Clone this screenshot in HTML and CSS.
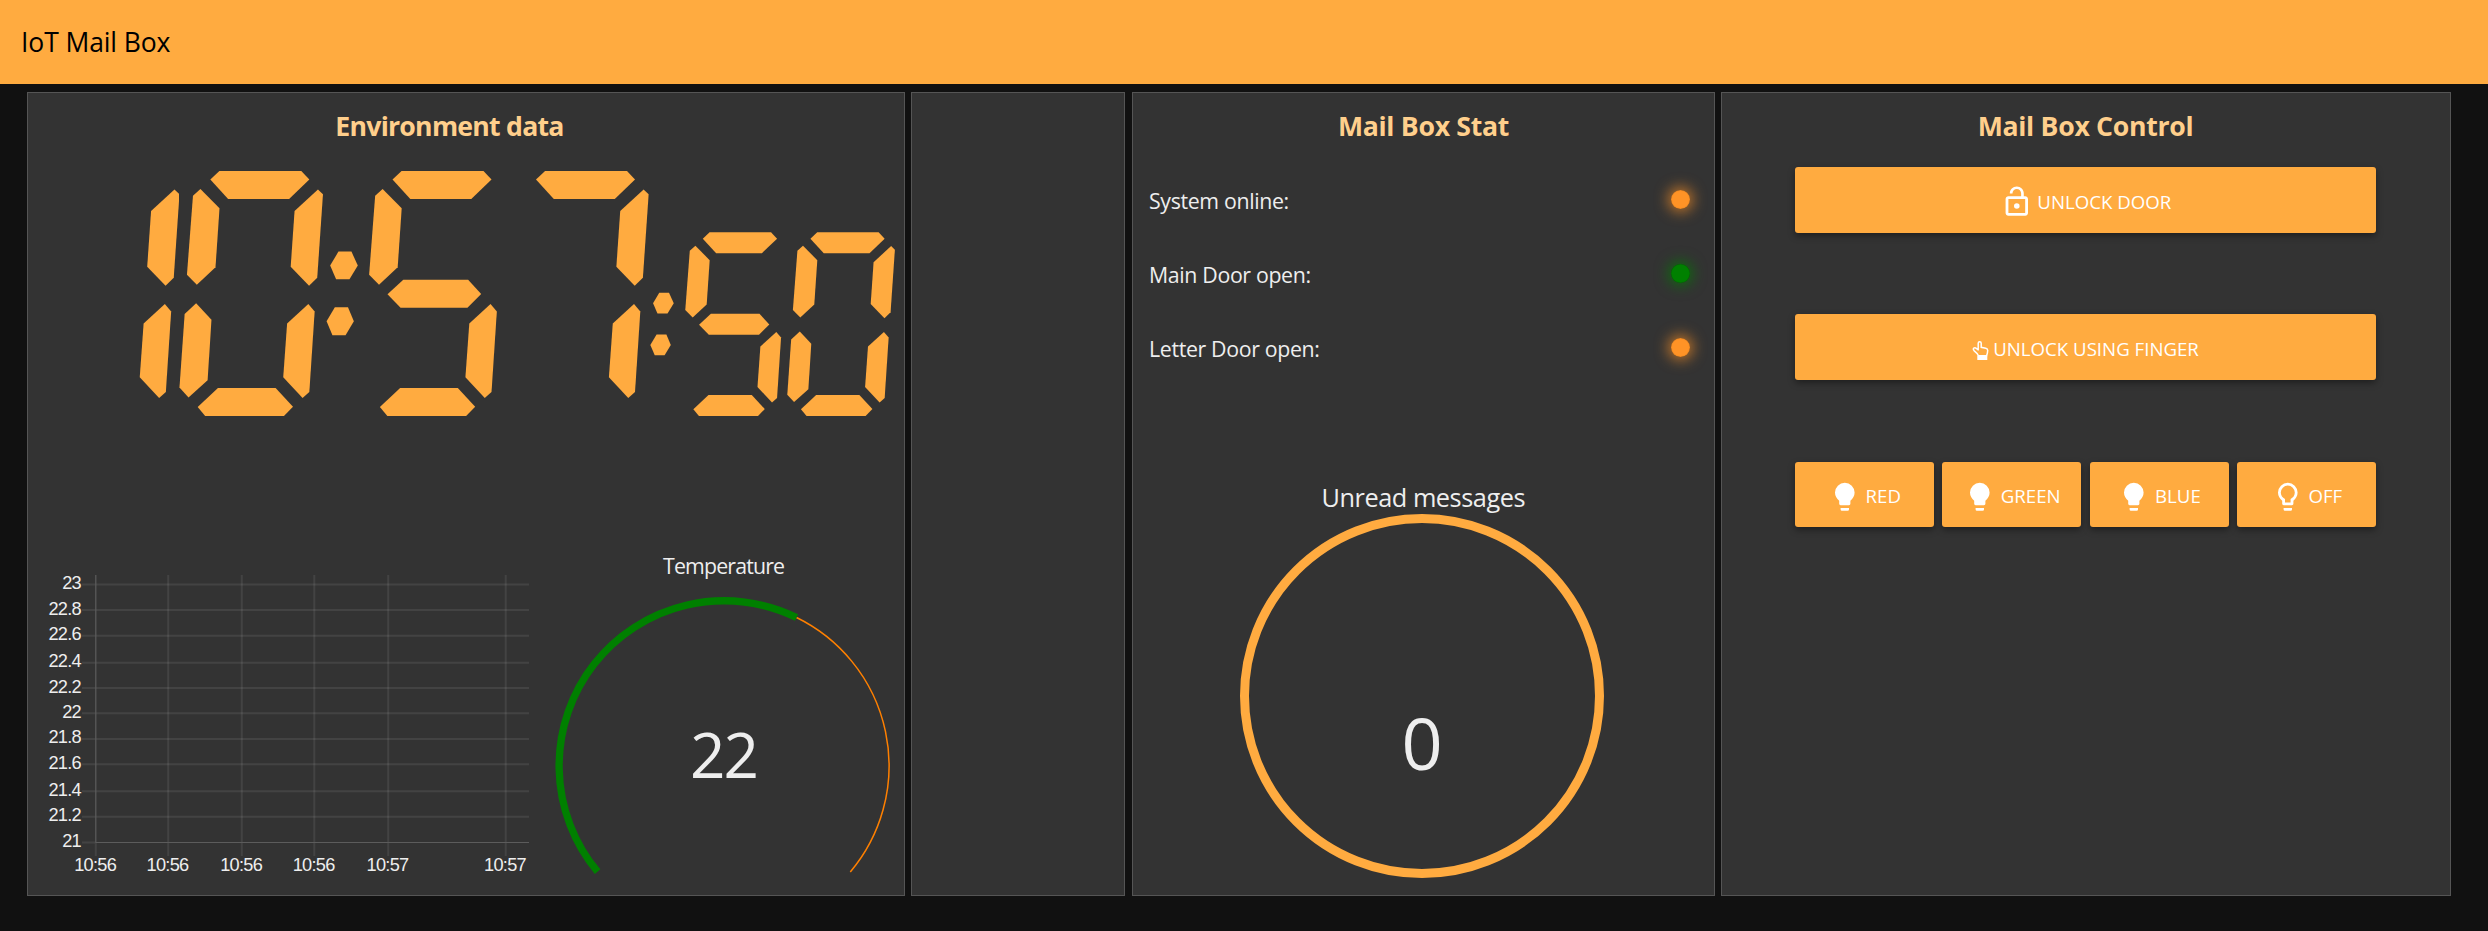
FILE: index.html
```html
<!DOCTYPE html>
<html lang="en">
<head>
<meta charset="utf-8">
<title>IoT Mail Box</title>
<link rel="stylesheet" href="styles.css">
</head>
<body>
<header class="toolbar">IoT Mail Box</header>
<main class="groups">
  <section class="group group-env">
    <h2 class="group-title">Environment data</h2>
    <div class="clock" role="img" aria-label="10:57:50">
      <div class="digits">
        <div class="digit"><i class="seg b"></i><i class="seg c"></i></div>
        <div class="digit"><i class="seg a"></i><i class="seg b"></i><i class="seg c"></i><i class="seg d"></i><i class="seg e"></i><i class="seg f"></i></div>
        <div class="colon"><i class="seg dot-top"></i><i class="seg dot-bottom"></i></div>
        <div class="digit"><i class="seg a"></i><i class="seg c"></i><i class="seg d"></i><i class="seg f"></i><i class="seg g"></i></div>
        <div class="digit"><i class="seg a"></i><i class="seg b"></i><i class="seg c"></i></div>
      </div>
      <div class="digits seconds">
        <div class="colon"><i class="seg dot-top"></i><i class="seg dot-bottom"></i></div>
        <div class="digit"><i class="seg a"></i><i class="seg c"></i><i class="seg d"></i><i class="seg f"></i><i class="seg g"></i></div>
        <div class="digit"><i class="seg a"></i><i class="seg b"></i><i class="seg c"></i><i class="seg d"></i><i class="seg e"></i><i class="seg f"></i></div>
      </div>
    </div>
    <div class="env-row">
      <svg class="chart" width="504" height="320" viewBox="28 560 504 320">
        <g class="grid">
          <path d="M82 584.5H529M82 610H529M82 635.7H529M82 662.7H529M82 688H529M82 713.3H529M82 739H529M82 764.3H529M82 791.3H529M82 816.7H529M82 842.5H95"/>
          <path d="M168.2 575V856M241.8 575V856M314.3 575V856M388.2 575V856M505.7 575V856M95.8 842V856"/>
        </g>
        <path class="axis" d="M95.8 575V842.5H529"/>
        <g class="ylabels">
          <text x="81" y="589.2">23</text><text x="81" y="614.5">22.8</text><text x="81" y="639.7">22.6</text><text x="81" y="667.3">22.4</text><text x="81" y="692.5">22.2</text><text x="81" y="717.7">22</text><text x="81" y="743">21.8</text><text x="81" y="768.5">21.6</text><text x="81" y="795.7">21.4</text><text x="81" y="821">21.2</text><text x="81" y="846.5">21</text>
        </g>
        <g class="xlabels">
          <text x="95.2" y="870.5">10:56</text><text x="167.5" y="870.5">10:56</text><text x="241.2" y="870.5">10:56</text><text x="313.7" y="870.5">10:56</text><text x="387.5" y="870.5">10:57</text><text x="505" y="870.5">10:57</text>
        </g>
      </svg>
      <svg class="gauge" width="350" height="350" viewBox="549 546 350 350">
        <text class="gauge-title" x="724" y="574" textLength="122">Temperature</text>
        <path class="gauge-track" d="M796.5 617.5A165 165 0 0 1 850.3 872"/>
        <path class="gauge-value" d="M597.6 871.7A165 165 0 0 1 796.5 617.5"/>
        <text class="gauge-number" x="723.5" y="777.5">22</text>
      </svg>
    </div>
  </section>

  <section class="group"></section>

  <section class="group group-stat">
    <h2 class="group-title">Mail Box Stat</h2>
    <div class="status"><span>System online:</span><i class="led led-orange"></i></div>
    <div class="status"><span>Main Door open:</span><i class="led led-green"></i></div>
    <div class="status"><span>Letter Door open:</span><i class="led led-orange"></i></div>
    <svg class="unread" width="400" height="400" viewBox="1223 480 400 400">
      <text class="unread-title" x="1423.5" y="506.5" textLength="204">Unread messages</text>
      <circle class="unread-ring" cx="1422" cy="696" r="177.5"/>
      <text class="unread-number" x="1422" y="769.5">0</text>
    </svg>
  </section>

  <section class="group group-control">
    <h2 class="group-title">Mail Box Control</h2>
    <button class="btn">
      <svg class="icon" viewBox="0 0 24 24"><circle cx="12" cy="15" r="2"/><path d="M18 8h-1V6c0-2.760-2.240-5-5-5S7 3.240 7 6h1.900c0-1.710 1.390-3.100 3.100-3.100s3.100 1.390 3.100 3.100v2H6c-1.100 0-2 .9-2 2v10c0 1.100.9 2 2 2h12c1.100 0 2-.9 2-2V10c0-1.100-.9-2-2-2zm0 12H6V10h12v10z"/></svg>
      <span>UNLOCK DOOR</span>
    </button>
    <button class="btn btn-finger">
      <svg class="icon-hand" viewBox="0 0 17 20"><path class="hand-line" d="M6.200 9.500V2.300a1.500 1.500 0 0 1 3 0v4l4.600 1q2 .5 1.900 2.300 0 2-1.100 5.200H6.500Q5.500 12.300 2.200 9.800 .7 8.200 1.700 7.200q1.300-1 2.600 .2L6.200 8.800"/><path class="hand-cuff" d="M5.300 14.500h10v4.500h-10z"/></svg>
      <span>UNLOCK USING FINGER</span>
    </button>
    <div class="btn-row">
      <button class="btn"><svg class="icon" viewBox="0 0 24 24"><path d="M12,2A7,7 0 0,0 5,9C5,11.380 6.190,13.470 8,14.740V17A1,1 0 0,0 9,18H15A1,1 0 0,0 16,17V14.740C17.810,13.470 19,11.380 19,9A7,7 0 0,0 12,2M9,21A1,1 0 0,0 10,22H14A1,1 0 0,0 15,21V20H9V21Z"/></svg><span>RED</span></button>
      <button class="btn"><svg class="icon" viewBox="0 0 24 24"><path d="M12,2A7,7 0 0,0 5,9C5,11.380 6.190,13.470 8,14.740V17A1,1 0 0,0 9,18H15A1,1 0 0,0 16,17V14.740C17.810,13.470 19,11.380 19,9A7,7 0 0,0 12,2M9,21A1,1 0 0,0 10,22H14A1,1 0 0,0 15,21V20H9V21Z"/></svg><span>GREEN</span></button>
      <button class="btn"><svg class="icon" viewBox="0 0 24 24"><path d="M12,2A7,7 0 0,0 5,9C5,11.380 6.190,13.470 8,14.740V17A1,1 0 0,0 9,18H15A1,1 0 0,0 16,17V14.740C17.810,13.470 19,11.380 19,9A7,7 0 0,0 12,2M9,21A1,1 0 0,0 10,22H14A1,1 0 0,0 15,21V20H9V21Z"/></svg><span>BLUE</span></button>
      <button class="btn"><svg class="icon" viewBox="0 0 24 24"><path d="M12,2A7,7 0 0,1 19,9C19,11.380 17.810,13.470 16,14.740V17A1,1 0 0,1 15,18H9A1,1 0 0,1 8,17V14.740C6.190,13.470 5,11.380 5,9A7,7 0 0,1 12,2M9,21V20H15V21A1,1 0 0,1 14,22H10A1,1 0 0,1 9,21M12,4A5,5 0 0,0 7,9C7,11.050 8.230,12.810 10,13.580V16H14V13.580C15.770,12.810 17,11.050 17,9A5,5 0 0,0 12,4Z"/></svg><span>OFF</span></button>
    </div>
  </section>
</main>
</body>
</html>
```
FILE: styles.css
```css
* { box-sizing: border-box; }

body {
  margin: 0;
  height: 931px;
  background: #111;
  color: #eee;
  font-family: "Open Sans", "Noto Sans", sans-serif;
  overflow: hidden;
}

.toolbar {
  height: 84px;
  padding-left: 21px;
  background: #ffab40;
  color: #000;
  font-size: 26.5px;
  line-height: 85px;
  letter-spacing: -0.1px;
}

.groups {
  display: grid;
  grid-template-columns: 878px 214px 584px 730px;
  column-gap: 6px;
  padding: 8px 0 0 27px;
}
.group {
  height: 804px;
  background: #333;
  border: 1px solid #555;
}
.group-stat { margin-left: 1px; }

.group-title {
  margin: 0;
  height: 74px;
  padding-top: 14px;
  color: #ffcf8c;
  font-size: 26.67px;
  font-weight: 700;
  line-height: 38px;
  letter-spacing: -0.3px;
  text-align: center;
}
.group-env .group-title { padding-right: 33px; letter-spacing: -0.75px; }

/* Seven-segment clock: 1em is the height of a digit */
.clock {
  display: flex;
  align-items: flex-end;
  height: 249px;
  padding-left: 8px;
}
.digits { display: flex; font-size: 245px; }
.seconds { font-size: 183.75px; }
.seconds .colon { margin: 0 3px 0 -1px; }
.digit, .colon { display: grid; height: 1em; }
.digit { width: 0.5857em; }
.colon { width: 0.158em; }
.seg { grid-area: 1 / 1; background: #ffab40; }
.a { clip-path: polygon(21.5% 3.5%, 27.8% 0, 84.9% 0, 90.5% 3.5%, 76.4% 11.4%, 33.9% 11.4%); }
.b { clip-path: polygon(96.5% 7.5%, 100% 9.5%, 96% 43.6%, 90.3% 46.8%, 77.5% 39.1%, 80.2% 16.3%); }
.c { clip-path: polygon(89.8% 54.3%, 94.2% 57.3%, 90.5% 90.2%, 85.8% 92.7%, 72.3% 84.2%, 75% 62.2%); }
.d { clip-path: polygon(26.8% 88.6%, 67% 88.6%, 79.1% 96.2%, 72.8% 100%, 17.9% 100%, 12.7% 96.3%); }
.e { clip-path: polygon(11.6% 54%, 22.3% 60.7%, 19.6% 85.4%, 6.3% 92.4%, 0 88.4%, 3.6% 58.4%); }
.f { clip-path: polygon(14.6% 7.3%, 27.9% 15.2%, 25.1% 39.3%, 12.1% 46.4%, 5.2% 42.3%, 9.4% 10.1%); }
.g { clip-path: polygon(29% 44.4%, 74.2% 44.4%, 83.3% 50.2%, 73.7% 55.8%, 27.1% 55.8%, 18% 50.3%); }
.dot-top { clip-path: polygon(40% 32.9%, 73.6% 32.9%, 90% 38.6%, 68.5% 44.2%, 33.9% 44.2%, 18.6% 38.6%); }
.dot-bottom { clip-path: polygon(30.7% 55.6%, 64.6% 55.6%, 79.8% 61.3%, 58.4% 67%, 24.5% 67%, 9.3% 61.3%); }

.env-row {
  display: flex;
  justify-content: space-between;
  align-items: flex-start;
  height: 350px;
  margin: 130px 5px 0 0;
}
.chart {
  margin-top: 14px;
  font-family: "Liberation Sans", Arial, sans-serif;
  font-size: 18.2px;
  letter-spacing: -0.7px;
  fill: #eee;
}
.grid { stroke: #fff; stroke-opacity: 0.08; stroke-width: 2; fill: none; }
.axis { stroke: #5c5c5c; stroke-width: 1.2; fill: none; }
.ylabels { text-anchor: end; }
.xlabels { text-anchor: middle; }

.gauge text, .unread text { fill: #eee; text-anchor: middle; }
.gauge-title { font-size: 21.33px; }
.gauge-number { font-size: 62px; letter-spacing: -2px; }
.gauge-track { fill: none; stroke: #ff8000; stroke-width: 1.5; }
.gauge-value { fill: none; stroke: green; stroke-width: 7.3; }

.status {
  display: flex;
  justify-content: space-between;
  align-items: center;
  height: 74px;
  padding: 0 24px 0 16px;
  font-size: 21.33px;
  letter-spacing: -0.35px;
}
.group-stat .group-title { height: 70px; }
.led { width: 19px; height: 19px; margin-top: -1px; border-radius: 50%; }
.led-orange { background: #ff9326; box-shadow: inset 0 0 1px #00000066, 0 0 14px 3px #ff9326b0; }
.led-green { background: green; box-shadow: inset 0 0 1px #00000066, 0 0 14px 3px #008000b0; }

.unread { display: block; margin: 95px auto 0 90px; }
.unread-title { font-size: 25.3px; }
.unread-ring { fill: none; stroke: #ffab40; stroke-width: 9; }
.unread-number { font-size: 72px; }

.group-control { padding: 0 74px 0 73px; }
.btn {
  display: flex;
  justify-content: center;
  align-items: center;
  gap: 4px;
  width: 100%;
  height: 66px;
  padding: 0;
  border: 0;
  border-radius: 3px;
  background: #ffab40;
  box-shadow: 0 3px 7px #0006;
  color: #fff;
  font-family: inherit;
  font-size: 18.67px;
}
.btn span { margin-top: 2px; }
.icon { width: 33.6px; height: 33.6px; margin-top: 4px; fill: #fff; }
.icon-hand { width: 17px; height: 20px; margin-top: 7px; }
.hand-line { fill: none; stroke: #fff; stroke-width: 1.5; }
.hand-cuff { fill: #fff; }
.btn-finger { margin-top: 81px; }
.btn-row { display: grid; grid-template-columns: repeat(4, 1fr); gap: 8.3px; margin-top: 82px; }
.btn-row .btn { height: 65px; }
```
